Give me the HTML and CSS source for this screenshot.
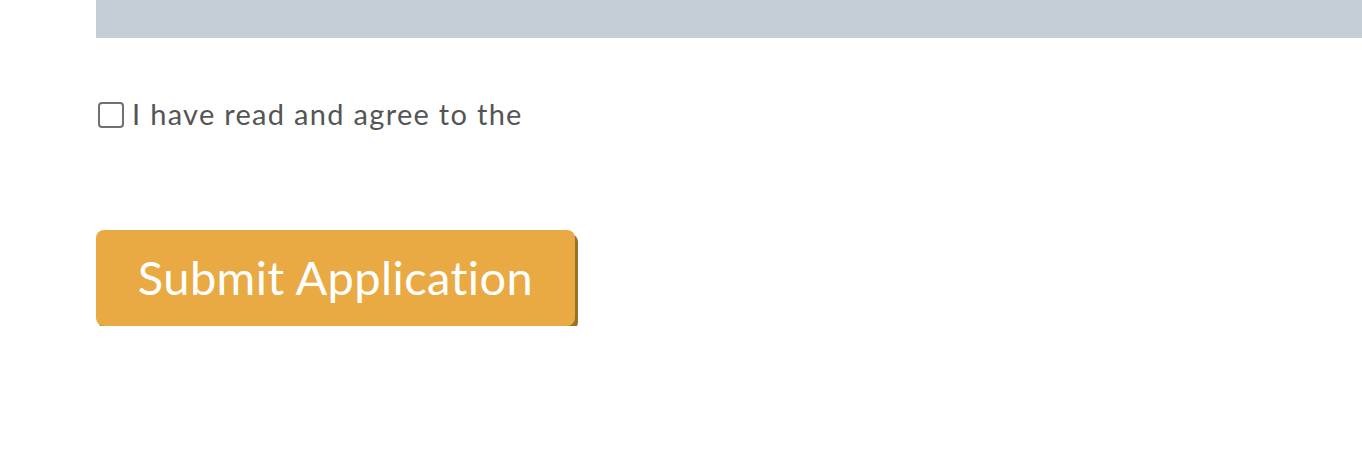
FILE: index.html
```html
<!DOCTYPE html>
<html lang="en">
<head>
  <meta charset="UTF-8">
  <title>Application</title>
  <link rel="stylesheet" href="styles.css">
</head>
<body>
  <div class="form-wrap">
    <div class="top-bar"></div>
    <label class="agree-row">
      <span class="check-box"></span>
      <span class="agree-text">I have read and agree to the</span>
    </label>
    <button class="submit-btn" type="button">Submit Application</button>
  </div>
</body>
</html>
```

FILE: styles.css
```css
body {
  margin: 0;
  background: #ffffff;
  font-family: Lato, 'Open Sans', sans-serif;
}

.form-wrap {
  padding-left: 96px;
}

.top-bar {
  height: 38px;
  background-color: #c5cdd5;
}

.agree-row {
  display: flex;
  align-items: center;
  gap: 8px;
  margin-top: 64px;
  margin-left: 2px;
  height: 26px;
}

.check-box {
  width: 22px;
  height: 22px;
  border: 2px solid #707070;
  border-radius: 4px;
  box-sizing: content-box;
}

.agree-text {
  font-size: 29px;
  line-height: 26px;
  letter-spacing: 1.3px;
  color: #555555;
  font-variant-ligatures: none;
  margin-top: -2px;
}

.submit-btn {
  display: block;
  margin-top: 102px;
  width: 479px;
  height: 96px;
  background-color: #eaaa43;
  border: none;
  border-radius: 8px;
  box-shadow: 3px 4px 0 #9a6f2c;
  color: #ffffff;
  font-family: Lato, 'Open Sans', sans-serif;
  font-size: 47px;
  letter-spacing: 0.4px;
  font-variant-ligatures: none;
  padding: 0 0 2px;
  cursor: pointer;
}
```
